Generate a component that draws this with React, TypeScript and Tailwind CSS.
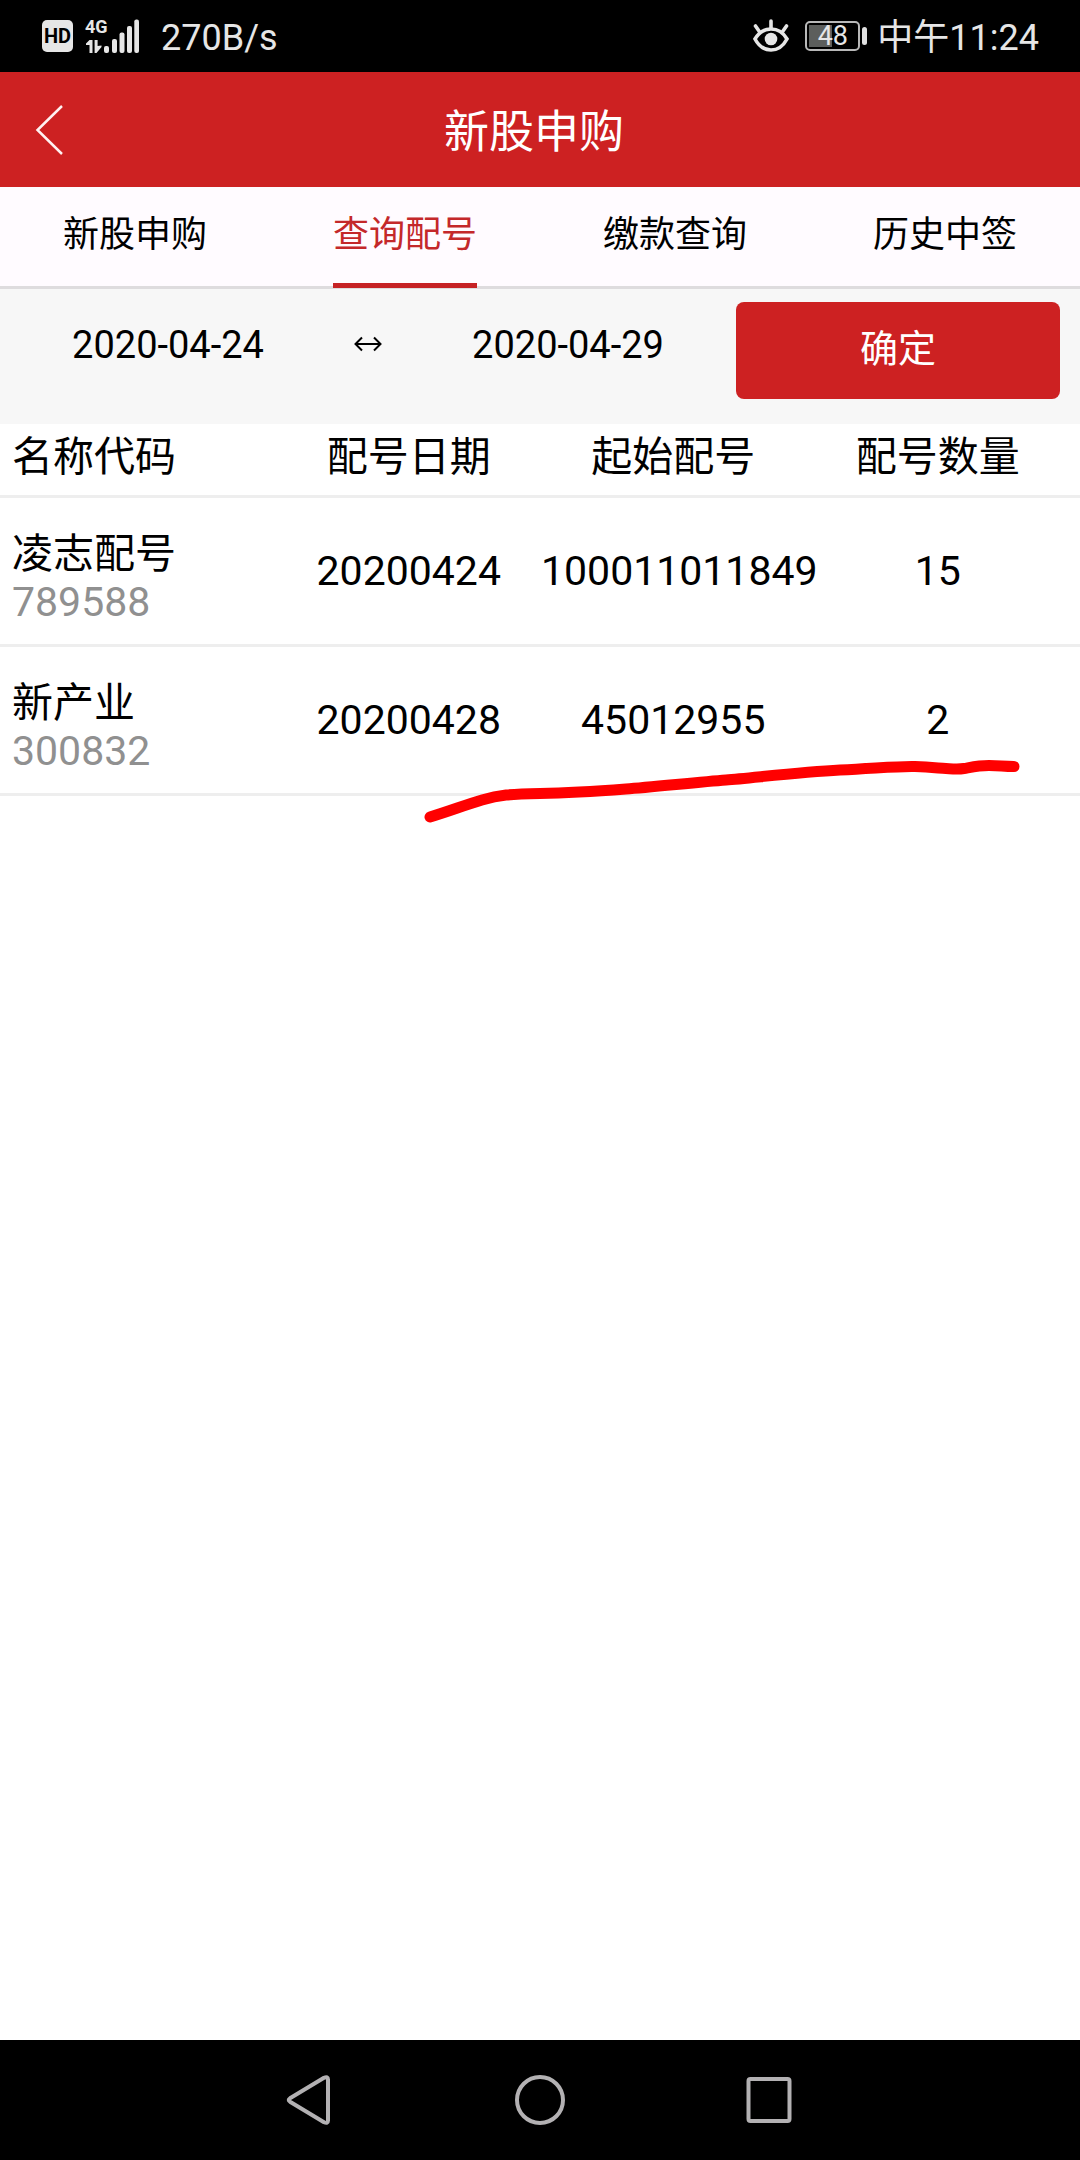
import { useState } from "react";
import clsx from "clsx";

interface Allotment {
  name: string;
  code: string;
  date: string;
  start: string;
  count: number;
}

const TABS = ["新股申购", "查询配号", "缴款查询", "历史中签"];

const COLUMNS = ["名称代码", "配号日期", "起始配号", "配号数量"];

const ALLOTMENTS: Allotment[] = [
  {
    name: "凌志配号",
    code: "789588",
    date: "20200424",
    start: "100011011849",
    count: 15,
  },
  {
    name: "新产业",
    code: "300832",
    date: "20200428",
    start: "45012955",
    count: 2,
  },
];

function SignalIcon(): JSX.Element {
  return (
    <div className="ml-3 flex h-[34px] items-end text-[#e6e6e6]">
      <div className="flex h-full w-[18px] flex-col justify-between">
        <span className="text-lg leading-4 font-bold">4G</span>
        <svg width="18" height="13" viewBox="0 0 18 13" fill="currentColor">
          <path d="M4.5 0H7.5V13H4.5V5H1L1 3.6Z" />
          <path d="M9.6 0H12.6V6L16.5 5.5V7L11.5 13H9.6Z" />
        </svg>
      </div>
      <svg width="36" height="34" viewBox="0 0 36 34" fill="currentColor">
        <rect x="1" y="27" width="5" height="7" rx="2" />
        <rect x="9" y="20" width="5" height="14" rx="2" />
        <rect x="16.5" y="13.5" width="5" height="20.5" rx="2" />
        <rect x="24" y="7" width="5" height="27" rx="2" />
        <rect x="31.3" y="0.5" width="4.7" height="33.5" rx="2" />
      </svg>
    </div>
  );
}

function EyeIcon(): JSX.Element {
  return (
    <svg
      width="36"
      height="34"
      viewBox="0 0 36 34"
      fill="none"
      stroke="#e6e6e6"
      strokeWidth="3.6"
      strokeLinecap="round"
    >
      <path d="M2 20C6 13 11.5 10 18 10S30 13 34 20C30 27.5 24.5 31 18 31S6 27.5 2 20Z" />
      <path d="M18 2V9M2.5 7L6 12M33.5 7L30 12" />
      <circle cx="18" cy="20" r="6.3" fill="#e6e6e6" stroke="none" />
    </svg>
  );
}

function Battery({ level }: { level: number }): JSX.Element {
  return (
    <div className="ml-4 flex items-center gap-0.5">
      <div className="relative h-[30px] w-[55px] rounded-[5px] border-2 border-[#b8b8b8] p-0.5">
        <div className="h-full bg-[#5c5e5c]" style={{ width: `${level}%` }} />
        <span className="absolute inset-0 text-center text-[27px] leading-[27px] text-[#e6e6e6]">
          {level}
        </span>
      </div>
      <div className="h-[18px] w-[5px] rounded-sm bg-[#e0e0e0]" />
    </div>
  );
}

function StatusBar(): JSX.Element {
  return (
    <div className="flex h-[72px] items-center justify-between bg-black pr-[41px] pl-[42px] text-4xl leading-[42px] text-[#e6e6e6]">
      <div className="flex items-center">
        <span className="flex h-8 w-[31px] items-center justify-center rounded-[5px] bg-[#e6e6e6] text-xl leading-none font-bold text-black">
          HD
        </span>
        <SignalIcon />
        <span className="ml-[22px] pt-1">270B/s</span>
      </div>
      <div className="flex items-center">
        <EyeIcon />
        <Battery level={48} />
        <span className="ml-2.5 pt-1">中午11:24</span>
      </div>
    </div>
  );
}

function NavBar(): JSX.Element {
  return (
    <nav className="flex h-[120px] items-center justify-center gap-[180px] bg-black">
      <button type="button" aria-label="返回">
        <svg width="50" height="50" viewBox="0 0 50 50" fill="none">
          <path
            d="M5 23.3L39 2.8Q43 1 43 4.5V45.5Q43 49 39 47.2L5 26.7Q2.5 25 5 23.3Z"
            stroke="#b3b1b3"
            strokeWidth="4"
            strokeLinejoin="round"
          />
        </svg>
      </button>
      <button type="button" aria-label="主页">
        <svg width="50" height="50" viewBox="0 0 50 50" fill="none">
          <circle cx="25" cy="25" r="23" stroke="#b3b1b3" strokeWidth="4" />
        </svg>
      </button>
      <button type="button" aria-label="最近任务">
        <svg width="50" height="50" viewBox="0 0 50 50" fill="none">
          <rect
            x="3.5"
            y="4"
            width="41"
            height="42"
            rx="2"
            stroke="#b3b1b3"
            strokeWidth="4"
          />
        </svg>
      </button>
    </nav>
  );
}

function App(): JSX.Element {
  const [activeTab, setActiveTab] = useState<string>("查询配号");
  const [startDate, setStartDate] = useState<string>("2020-04-24");
  const [endDate, setEndDate] = useState<string>("2020-04-29");

  return (
    <div className="flex min-h-screen flex-col bg-white font-['Roboto','Noto_Sans_CJK_SC',sans-serif] text-black">
      <StatusBar />

      <header className="flex h-[115px] items-center bg-[#cd2122] pr-9 pl-6 text-white">
        <button
          type="button"
          aria-label="返回"
          className="flex h-16 w-16 items-center"
        >
          <svg width="50" height="54" viewBox="0 0 50 54" fill="none">
            <path d="M38 3L13.5 27L38 51" stroke="#fff2f2" strokeWidth="2.5" />
          </svg>
        </button>
        <h1 className="flex-1 pt-1.5 text-center text-[45px] leading-[60px]">
          新股申购
        </h1>
        <div className="w-16" />
      </header>

      <div
        role="tablist"
        className="grid h-[102px] grid-cols-4 justify-items-center border-b-3 border-[#dedcde] bg-[#fffbff]"
      >
        {TABS.map((tab) => (
          <button
            key={tab}
            type="button"
            role="tab"
            aria-selected={tab === activeTab}
            onClick={() => setActiveTab(tab)}
            className={clsx(
              "-mb-0.5 border-b-5 text-4xl",
              tab === activeTab
                ? "border-[#c62225] text-[#c4282a]"
                : "border-transparent",
            )}
          >
            {tab}
          </button>
        ))}
      </div>

      <form
        onSubmit={(event) => event.preventDefault()}
        className="flex items-start bg-[#f7f7f7] pt-[13px] pr-5 pb-[25px]"
      >
        <input
          type="text"
          aria-label="开始日期"
          value={startDate}
          onChange={(event) => setStartDate(event.target.value)}
          className="h-[86px] min-w-0 flex-1 text-center text-[38px]"
        />
        <div className="flex h-[84px] w-16 items-center justify-center">
          <svg
            width="28"
            height="16"
            viewBox="0 0 28 16"
            fill="none"
            stroke="black"
            strokeWidth="2"
          >
            <path d="M1 8H27M8 1.5L1.5 8L8 14.5M20 1.5L26.5 8L20 14.5" />
          </svg>
        </div>
        <input
          type="text"
          aria-label="结束日期"
          value={endDate}
          onChange={(event) => setEndDate(event.target.value)}
          className="h-[86px] min-w-0 flex-1 text-center text-[38px]"
        />
        <button
          type="submit"
          className="h-[97px] w-[324px] rounded-lg bg-[#cd2122] pb-0.5 text-[38px] text-white"
        >
          确定
        </button>
      </form>

      <main className="relative flex-1 text-[41px] leading-[48px]">
        <table className="block">
          <thead className="block">
            <tr className="grid grid-cols-4 border-b-3 border-[#eeeeee] pt-[9px] pr-2.5 pb-3.5 pl-3">
              {COLUMNS.map((column) => (
                <th
                  key={column}
                  scope="col"
                  className="text-center font-normal first:text-left"
                >
                  {column}
                </th>
              ))}
            </tr>
          </thead>
          <tbody className="block">
            {ALLOTMENTS.map((item) => (
              <tr
                key={item.code}
                className="grid grid-cols-4 items-center border-b-3 border-[#eeeeee] pr-2.5 pl-3 text-center"
              >
                <td className="pt-8 pb-[18px] text-left">
                  <div>{item.name}</div>
                  <div className="text-[#909090]">{item.code}</div>
                </td>
                <td>{item.date}</td>
                <td>{item.start}</td>
                <td>{item.count}</td>
              </tr>
            ))}
          </tbody>
        </table>

        {/* hand-drawn marker under the last row */}
        <svg
          viewBox="0 0 1080 420"
          fill="none"
          className="pointer-events-none absolute inset-x-0 top-0 w-full"
        >
          <path
            d="M430 393C450 387 465 381 482 376S510 370 540 369.5S600 367 626 365S700 358 726 356S800 348 840 346S900 342 915 342.5S938 344 946 344.5S958 345.5 964 344.5S978 341.5 989 341.5S1003 342.5 1014 342.5"
            stroke="#ff0000"
            strokeWidth="11"
            strokeLinecap="round"
            strokeLinejoin="round"
          />
        </svg>
      </main>

      <NavBar />
    </div>
  );
}

export default App;
